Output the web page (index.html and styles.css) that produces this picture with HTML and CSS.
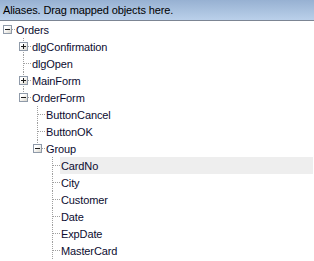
FILE: index.html
```html
<!DOCTYPE html>
<html>
<head>
<meta charset="utf-8">
<link rel="stylesheet" href="styles.css">
</head>
<body>
<div class="panel">
  <div class="header">Aliases. Drag mapped objects here.</div>
  <div class="tree">
    <div class="row l0"><span class="stub root"><span class="box minus"></span></span><span class="label">Orders</span></div>
    <div class="row l1"><span class="stub"><span class="box plus"></span></span><span class="label">dlgConfirmation</span></div>
    <div class="row l1"><span class="stub"></span><span class="label">dlgOpen</span></div>
    <div class="row l1"><span class="stub"><span class="box plus"></span></span><span class="label">MainForm</span></div>
    <div class="row l1"><span class="stub last"><span class="box minus"></span></span><span class="label">OrderForm</span></div>
    <div class="row l2"><span class="stub"></span><span class="label">ButtonCancel</span></div>
    <div class="row l2"><span class="stub"></span><span class="label">ButtonOK</span></div>
    <div class="row l2"><span class="stub last"><span class="box minus"></span></span><span class="label">Group</span></div>
    <div class="row l3"><span class="stub"></span><span class="label selected">CardNo</span></div>
    <div class="row l3"><span class="stub"></span><span class="label">City</span></div>
    <div class="row l3"><span class="stub"></span><span class="label">Customer</span></div>
    <div class="row l3"><span class="stub"></span><span class="label">Date</span></div>
    <div class="row l3"><span class="stub"></span><span class="label">ExpDate</span></div>
    <div class="row l3"><span class="stub"></span><span class="label">MasterCard</span></div>
  </div>
</div>
</body>
</html>
```

FILE: styles.css
```css
html, body {
  margin: 0;
  padding: 0;
  background: #ffffff;
}

body {
  width: 314px;
  height: 261px;
  overflow: hidden;
  font-family: "Liberation Sans", Arial, sans-serif;
  font-size: 11px;
}

.panel {
  display: flex;
  flex-direction: column;
}

.header {
  height: 20px;
  line-height: 20px;
  padding-left: 3px;
  color: #000000;
  letter-spacing: -0.12px;
  background: linear-gradient(to bottom, #97b1d2, #bad0ea);
  border-bottom: 1px solid #7c8593;
  white-space: nowrap;
}

.tree {
  display: flex;
  flex-direction: column;
}

.row {
  display: flex;
  align-items: stretch;
  height: 17px;
}

.l0 { padding-left: 3px; }
.l1 { padding-left: 19px; }
.l2 { padding-left: 33px; }
.l3 { padding-left: 48px; }

.stub {
  position: relative;
  flex: none;
  width: 9px;
  margin-right: 3px;
  display: flex;
  align-items: center;
}

/* vertical connector */
.stub::before {
  content: "";
  position: absolute;
  left: 4px;
  top: 0;
  bottom: 0;
  border-left: 1px dotted #a0a0a0;
}

.stub.last::before {
  bottom: 8px;
}

.stub.root::before {
  display: none;
}

/* horizontal connector */
.stub::after {
  content: "";
  position: absolute;
  left: 5px;
  width: 7px;
  top: 8px;
  border-top: 1px dotted #a0a0a0;
}

.box {
  position: relative;
  z-index: 1;
  box-sizing: border-box;
  width: 9px;
  height: 9px;
  border: 1px solid #8f9aa9;
  background: linear-gradient(135deg, #ffffff 30%, #d9d6cc);
  display: flex;
  align-items: center;
  justify-content: center;
}

.box::before {
  content: "";
  width: 5px;
  height: 1px;
  background: #1c1c1c;
}

.box.plus::after {
  content: "";
  position: absolute;
  left: 3px;
  top: 1px;
  width: 1px;
  height: 5px;
  background: #1c1c1c;
}

.label {
  display: flex;
  align-items: center;
  padding-left: 1px;
  padding-right: 2px;
  color: #0c0c30;
  letter-spacing: -0.12px;
  white-space: nowrap;
}

.label.selected {
  flex: 1;
  margin-right: 1px;
  background: #eeeeee;
}
```
